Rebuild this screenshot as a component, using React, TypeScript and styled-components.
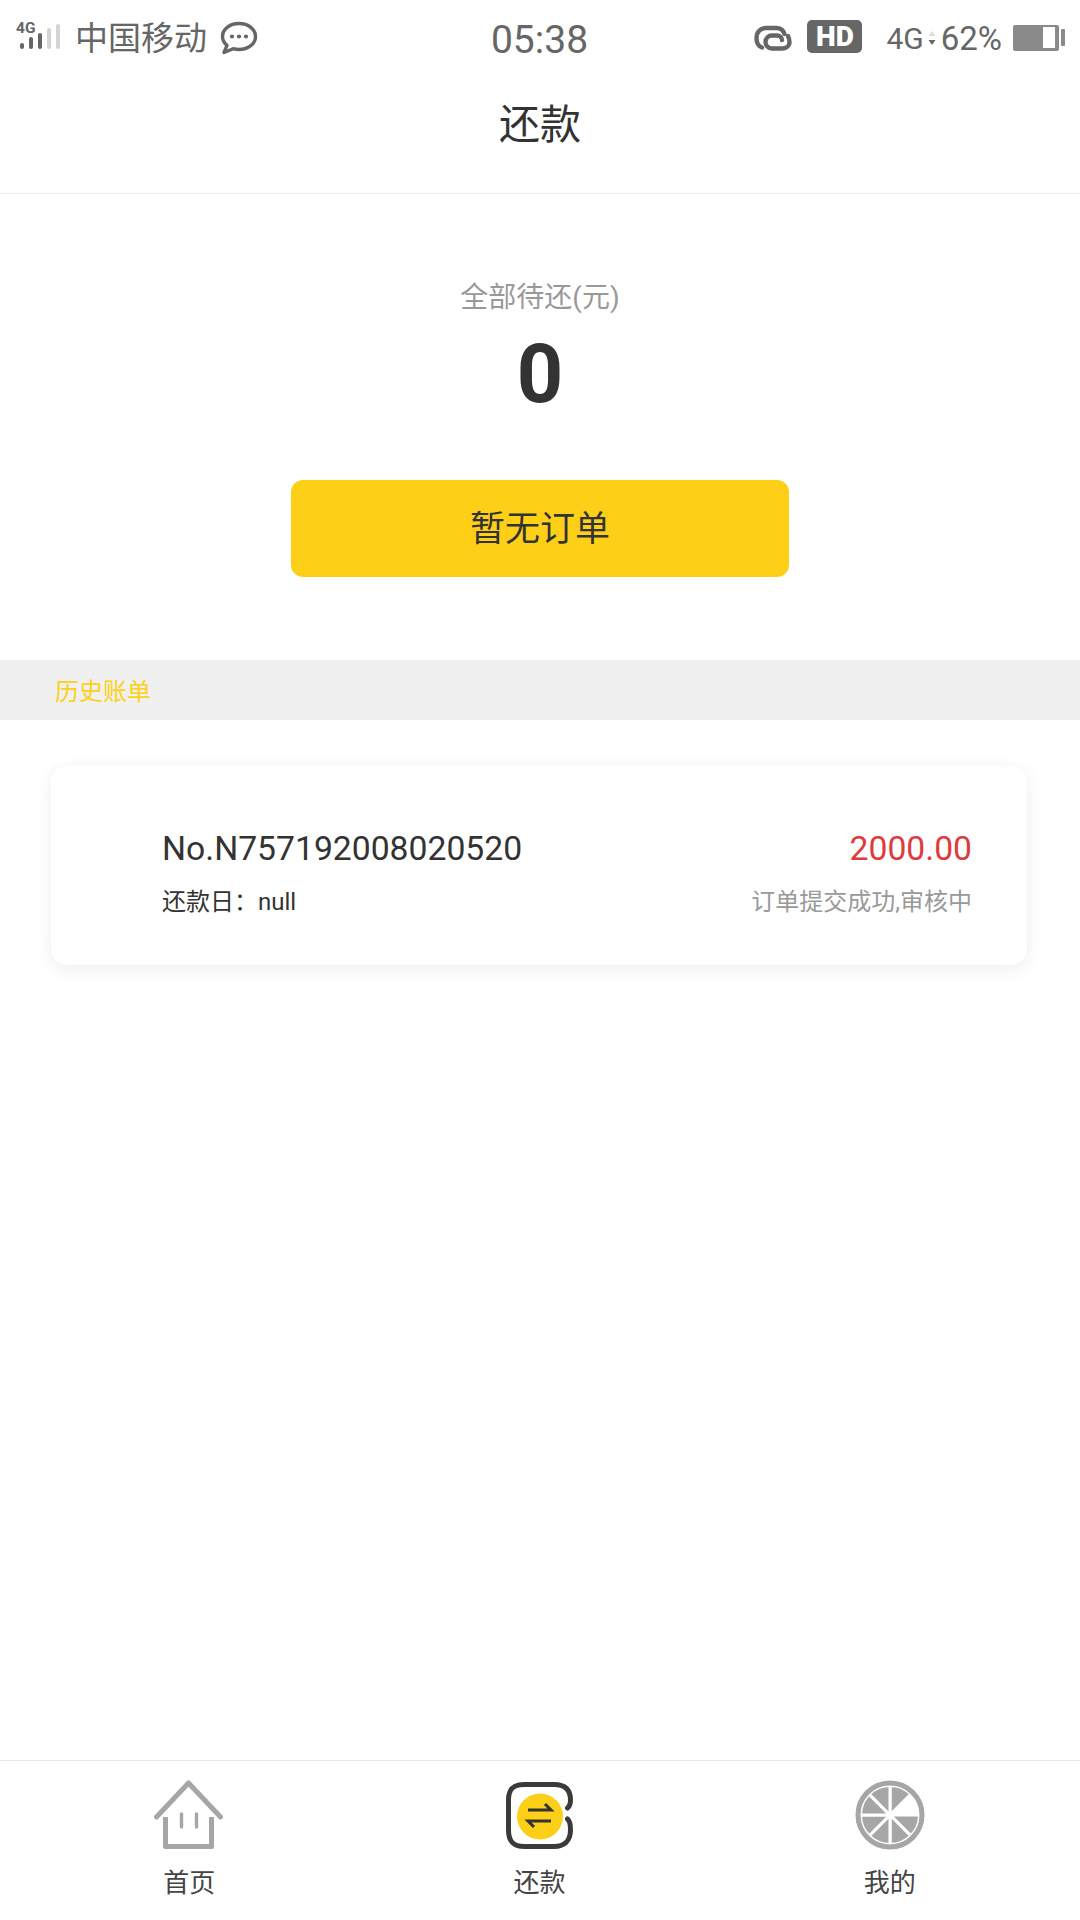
import React from "react";
import styled, { createGlobalStyle } from "styled-components";

const GlobalStyle = createGlobalStyle`
  html, body {
    margin: 0;
    padding: 0;
    background: #fff;
  }
  body {
    font-family: Roboto, "Noto Sans CJK SC", sans-serif;
  }
`;

export default function App() {
  return (
    <Page>
      <GlobalStyle />
      <StatusBar>
        <StatusLeft>
          <SignalIcon />
          <Carrier>中国移动</Carrier>
          <ChatIcon />
        </StatusLeft>
        <Clock>05:38</Clock>
        <StatusRight>
          <LinkIcon />
          <HdBadge>HD</HdBadge>
          <NetType>4G</NetType>
          <NetArrows />
          <Percent>62%</Percent>
          <BatteryIcon />
        </StatusRight>
      </StatusBar>

      <Header>还款</Header>

      <Summary>
        <SummaryLabel>全部待还(元)</SummaryLabel>
        <SummaryAmount>0</SummaryAmount>
        <PayButton>暂无订单</PayButton>
      </Summary>

      <SectionBar>历史账单</SectionBar>

      <BillList>
        <BillCard>
          <BillRow>
            <BillNumber>No.N757192008020520</BillNumber>
            <BillAmount>2000.00</BillAmount>
          </BillRow>
          <BillRow>
            <BillDate>还款日：null</BillDate>
            <BillStatus>订单提交成功,审核中</BillStatus>
          </BillRow>
        </BillCard>
      </BillList>

      <TabBar>
        <Tab>
          <HomeIcon />
          <TabLabel>首页</TabLabel>
        </Tab>
        <Tab>
          <RepayIcon />
          <TabLabel>还款</TabLabel>
        </Tab>
        <Tab>
          <MineIcon />
          <TabLabel>我的</TabLabel>
        </Tab>
      </TabBar>
    </Page>
  );
}

function SignalIcon() {
  return (
    <svg width="46" height="36" viewBox="0 0 46 36">
      <text x="0" y="13" fontFamily="Roboto, sans-serif" fontWeight="700" fontSize="15.500" fill="#666">
        4G
      </text>
      <g strokeWidth="4" strokeLinecap="round">
        <line x1="6" y1="25" x2="6" y2="27" stroke="#666" />
        <line x1="15" y1="19" x2="15" y2="27" stroke="#666" />
        <line x1="24" y1="15" x2="24" y2="27" stroke="#666" />
        <line x1="33" y1="10" x2="33" y2="27" stroke="#d4d4d4" />
        <line x1="42" y1="6" x2="42" y2="27" stroke="#d4d4d4" />
      </g>
    </svg>
  );
}

function ChatIcon() {
  return (
    <svg width="38" height="34" viewBox="0 0 38 34">
      <path
        d="M19 2.500c9.500 0 16.500 5.800 16.500 13s-7 13-16.500 13c-2 0-4-.3-5.800-.8L4 31.500l3-7.200C3.900 21.900 2.500 19 2.500 15.500c0-7.200 7-13 16.500-13z"
        fill="none"
        stroke="#666"
        strokeWidth="3.400"
        strokeLinejoin="round"
      />
      <circle cx="12" cy="15.500" r="2.100" fill="#666" />
      <circle cx="19" cy="15.500" r="2.100" fill="#666" />
      <circle cx="26" cy="15.500" r="2.100" fill="#666" />
    </svg>
  );
}

function LinkIcon() {
  return (
    <svg width="38" height="26" viewBox="0 0 38 26">
      <path
        d="M8 22.500C4 21 2.500 17 2.500 13C2.500 7 6.500 3 12 3H22C26.500 3 29.500 5.500 30.500 9"
        fill="none"
        stroke="#666"
        strokeWidth="4.400"
        strokeLinecap="round"
      />
      <path
        d="M34 11C35 13 35.500 15 35.500 17C35.500 21 32 23.500 28 23.500H18C14 23.500 11.500 20.500 11.500 17C11.500 13 14.500 10.500 18 10.500H23C26 10.500 28 12.500 28 15"
        fill="none"
        stroke="#666"
        strokeWidth="4.400"
        strokeLinecap="round"
      />
    </svg>
  );
}

function NetArrows() {
  return (
    <svg width="8" height="16" viewBox="0 0 8 16">
      <path d="M4 1l3.500 5H.5z" fill="#ddd" />
      <path d="M4 15L.5 10h7z" fill="#666" />
    </svg>
  );
}

function BatteryIcon() {
  return (
    <svg width="52" height="26" viewBox="0 0 52 26">
      <rect x="0" y="0" width="46" height="26" rx="2" fill="#8a8a8a" />
      <rect x="30" y="2" width="12" height="21" fill="#fff" />
      <rect x="48" y="4" width="4" height="17" rx="1" fill="#8a8a8a" />
    </svg>
  );
}

function HomeIcon() {
  return (
    <svg width="70" height="70" viewBox="0 0 70 70">
      <path
        d="M2.500 37L34.500 3l32 34"
        fill="none"
        stroke="#a6a6a6"
        strokeWidth="5"
        strokeLinecap="round"
        strokeLinejoin="round"
      />
      <path
        d="M11.500 37v29.500h46V37"
        fill="none"
        stroke="#a6a6a6"
        strokeWidth="5"
        strokeLinejoin="round"
      />
      <path d="M27.500 34v13M42.500 34v13" stroke="#a6a6a6" strokeWidth="3.400" strokeLinecap="round" />
    </svg>
  );
}

function RepayIcon() {
  return (
    <svg width="70" height="70" viewBox="0 0 70 70">
      <path
        d="M63.500 28C66 26 66.500 24 66.500 20C66.500 9 60 4.500 50 4.500H20C9 4.500 4.500 9 4.500 20V50C4.500 61 9 66.500 20 66.500H50C60 66.500 66.500 61 66.500 50C66.500 44 66 41 63.500 39"
        fill="none"
        stroke="#3a3a3a"
        strokeWidth="5"
        strokeLinecap="round"
      />
      <circle cx="36" cy="36.500" r="23" fill="#fdd017" />
      <path d="M24 30h23l-6-6" fill="none" stroke="#333" strokeWidth="3" />
      <path d="M47 41H24l6 6" fill="none" stroke="#333" strokeWidth="3" />
    </svg>
  );
}

function MineIcon() {
  const r = 29.5;
  const wedge = (a: number, b: number) => {
    const rad = (d: number) => ((d - 90) * Math.PI) / 180;
    const p = (d: number) => `${35 + r * Math.cos(rad(d))} ${35 + r * Math.sin(rad(d))}`;
    return `M35 35L${p(a)}A${r} ${r} 0 0 1 ${p(b)}Z`;
  };
  const filled = [0, 90, 135, 180, 225, 270, 315];
  return (
    <svg width="70" height="70" viewBox="0 0 70 70">
      {filled.map((a) => (
        <path key={a} d={wedge(a, a + 45)} fill="#a6a6a6" stroke="#fff" strokeWidth="3" />
      ))}
      <circle cx="35" cy="35" r="32" fill="none" stroke="#a6a6a6" strokeWidth="5" />
    </svg>
  );
}

const Page = styled.div`
  display: flex;
  flex-direction: column;
  width: 1080px;
  height: 1920px;
  background: #fff;
  overflow: hidden;
`;

const StatusBar = styled.div`
  display: grid;
  grid-template-columns: 1fr auto 1fr;
  align-items: center;
  height: 76px;
  padding: 0 15px 0 16px;
  color: #666;
`;

const StatusLeft = styled.div`
  display: flex;
  align-items: center;
`;

const Carrier = styled.span`
  margin: 0 13px 4px 13px;
  font-size: 33px;
  font-family: "Noto Sans CJK SC", sans-serif;
  color: #666;
`;

const Clock = styled.div`
  margin: 4px 2px 0 0;
  font-size: 39px;
  color: #666;
`;

const StatusRight = styled.div`
  display: flex;
  align-items: center;
  justify-content: flex-end;
`;

const HdBadge = styled.span`
  margin: 0 0 3px 15px;
  width: 55px;
  height: 33px;
  border-radius: 5px;
  background: #666;
  color: #fff;
  font-size: 28px;
  font-weight: 900;
  line-height: 33px;
  text-align: center;
`;

const NetType = styled.span`
  margin: 0 4px 0 24px;
  font-size: 30px;
`;

const Percent = styled.span`
  margin: 0 11px 0 5px;
  font-size: 33px;
`;

const Header = styled.div`
  height: 118px;
  line-height: 98px;
  text-align: center;
  font-size: 41px;
  color: #333;
  border-bottom: 1px solid #eee;
  box-sizing: border-box;
`;

const Summary = styled.div`
  display: flex;
  flex-direction: column;
  align-items: center;
  height: 466px;
  padding-top: 84px;
  box-sizing: border-box;
`;

const SummaryLabel = styled.div`
  font-size: 28px;
  line-height: 40px;
  color: #999;
`;

const SummaryAmount = styled.div`
  margin-top: 12px;
  font-size: 81px;
  font-weight: 700;
  line-height: 90px;
  color: #333;
`;

const PayButton = styled.div`
  margin-top: 60px;
  width: 498px;
  height: 97px;
  border-radius: 12px;
  background: #fdd017;
  color: #333;
  font-size: 35px;
  line-height: 99px;
  text-align: center;
`;

const SectionBar = styled.div`
  height: 60px;
  padding-left: 55px;
  background: #f0f0f0;
  color: #fdd017;
  font-size: 24px;
  line-height: 64px;
`;

const BillList = styled.div`
  flex: 1;
  padding: 46px 53px 0 51px;
`;

const BillCard = styled.div`
  display: flex;
  flex-direction: column;
  justify-content: center;
  gap: 14px;
  box-sizing: border-box;
  height: 199px;
  padding: 14px 55px 0 111px;
  border-radius: 16px;
  background: #fff;
  box-shadow: 0 4px 18px rgba(0, 0, 0, 0.07);
`;

const BillRow = styled.div`
  display: flex;
  justify-content: space-between;
  align-items: center;
`;

const BillNumber = styled.div`
  font-size: 33.7px;
  color: #333;
`;

const BillAmount = styled.div`
  font-size: 33.7px;
  color: #e03a3e;
`;

const BillDate = styled.div`
  font-size: 24px;
  color: #333;
`;

const BillStatus = styled.div`
  font-size: 24px;
  color: #999;
`;

const TabBar = styled.div`
  display: grid;
  grid-template-columns: repeat(3, 1fr);
  height: 160px;
  padding: 0 15px 0 14px;
  border-top: 1px solid #e8e8e8;
  box-sizing: border-box;
`;

const Tab = styled.div`
  display: flex;
  flex-direction: column;
  align-items: center;
  padding-top: 19px;
`;

const TabLabel = styled.div`
  margin-top: 14px;
  font-size: 26px;
  line-height: 38px;
  color: #444;
`;
